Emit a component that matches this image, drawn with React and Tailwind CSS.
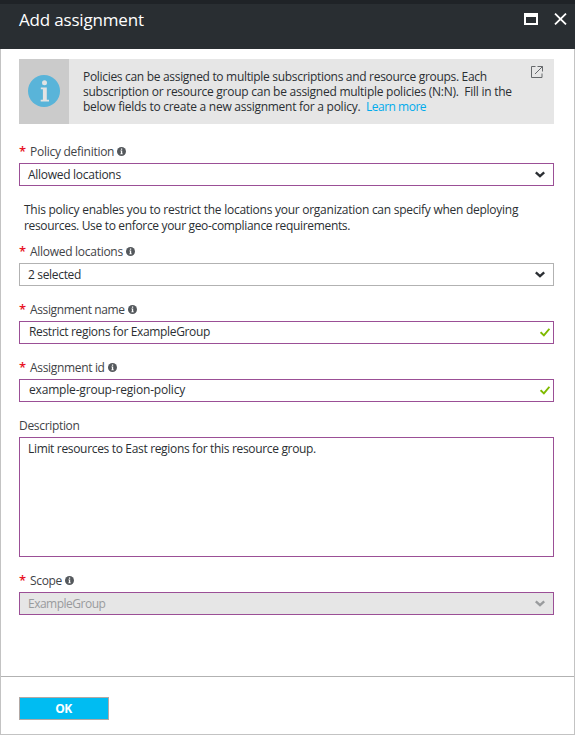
function InfoDot() {
  return (
    <svg width="9" height="9" viewBox="0 0 9 9" className="mb-px shrink-0">
      <circle cx="4.5" cy="4.5" r="4.5" fill="#54585c" />
      <path d="M3.9 1.5h1.3v1.2H3.9zM3.4 3.6h1.8v3h.6v.7H3.3v-.7h.6V4.3h-.5z" fill="#fff" />
    </svg>
  );
}

function Chevron({ className }) {
  return (
    <svg width="10" height="7" viewBox="0 0 10 7" fill="none" stroke="currentColor" strokeWidth="2.3" className={className}>
      <path d="M.8 1.300 5 5.200l4.200-3.900" />
    </svg>
  );
}

function Check() {
  return (
    <svg width="10" height="9" viewBox="0 0 10 9" fill="none" stroke="#7fba00" strokeWidth="1.9">
      <path d="M.6 4.200 3.900 7.400 9.400.8" />
    </svg>
  );
}

function Label({ children, className }) {
  return (
    <div className="flex h-4 items-center">
      <span className="mb-[2px] w-[11px] shrink-0 text-[13px] font-semibold leading-4 text-[#e81123]">*</span>
      <span className={`mr-[3px] whitespace-nowrap text-[#3f4347] ${className}`}>{children}</span>
      <InfoDot />
    </div>
  );
}

export default function App() {
  return (
    <div className="flex h-[735px] w-[575px] flex-col bg-white font-['Open_Sans','Noto_Sans',sans-serif] text-xs leading-4 text-[#2b2f33]">
      <header className="flex h-[49px] shrink-0 items-start justify-between border-t-4 border-[#1f2327] bg-[#292e32] pl-[19px] pr-2">
        <h1 className="mt-1 whitespace-nowrap text-[17px] leading-6 tracking-[-0.18px] text-white">Add assignment</h1>
        <div className="mt-[9px] flex items-start gap-4">
          <svg width="14" height="12" viewBox="0 0 14 12">
            <path d="M0 0h14v12H0zM2 4v6h10V4z" fill="#fff" fillRule="evenodd" />
          </svg>
          <svg width="13" height="12" viewBox="0 0 13 12" fill="none" stroke="#fff" strokeWidth="1.8">
            <path d="m1 .6 11 10.800M12 .6 1 11.400" />
          </svg>
        </div>
      </header>

      <div className="flex min-h-0 flex-1 flex-col border-x border-b border-[#c3c3c3]">
        <main className="flex-1 pl-[18px] pr-5 pt-[10px]">
          <section className="flex h-[65px] bg-[#e6e6e6]">
            <div className="flex w-[50px] items-center justify-center bg-[#cbcbcb] pb-px">
              <svg width="32" height="32" viewBox="0 0 32 32">
                <circle cx="16" cy="16" r="16" fill="#59b4d9" />
                <circle cx="16.500" cy="7.800" r="2.500" fill="#e3e3e3" />
                <path d="M12.800 12.500h6v12.300H21v1.700h-8.300v-1.700h2.200V14.200h-2.100z" fill="#e3e3e3" />
              </svg>
            </div>
            <div className="flex-1 whitespace-nowrap pl-[14px] pt-[10px] leading-[15px]">
              <p className="tracking-[-0.31px]">Policies can be assigned to multiple subscriptions and resource groups. Each</p>
              <p className="tracking-[-0.26px]">subscription or resource group can be assigned multiple policies (N:N).&nbsp; Fill in the</p>
              <p className="tracking-[-0.26px]">
                below fields to create a new assignment for a policy.&nbsp; <a className="tracking-[-0.5px] text-[#00abec]">Learn more</a>
              </p>
            </div>
            <svg width="12" height="12" viewBox="0 0 12 12" fill="none" stroke="#65686b" className="mr-[11px] mt-[7px]">
              <path d="M4.500.5h-4v11h10.500V7.500M6.500.5h5v5M11.500.5 4 8" />
            </svg>
          </section>

          <div className="mt-5">
            <Label className="tracking-[-0.27px]">Policy definition</Label>
            <div className="mt-[3px] flex h-[23px] items-center justify-between border border-[#9b4f96] pl-2 pr-[8px]">
              <span className="mt-px tracking-[-0.28px]">Allowed locations</span>
              <Chevron className="text-[#2b2f33]" />
            </div>
          </div>

          <div className="mt-4 whitespace-nowrap pl-[5px]">
            <p className="tracking-[-0.26px]">This policy enables you to restrict the locations your organization can specify when deploying</p>
            <p className="tracking-[-0.33px]">resources. Use to enforce your geo-compliance requirements.</p>
          </div>

          <div className="mt-[10px]">
            <Label className="tracking-[-0.28px]">Allowed locations</Label>
            <div className="mt-[3px] flex h-[23px] items-center justify-between border border-[#b2b2b2] pl-2 pr-[8px]">
              <span className="mt-px tracking-[-0.33px]">2 selected</span>
              <Chevron className="text-[#2b2f33]" />
            </div>
          </div>

          <div className="mt-4">
            <Label className="tracking-[-0.38px]">Assignment name</Label>
            <div className="mt-[3px] flex h-[23px] items-center justify-between border border-[#9b4f96] pl-[9px] pr-[3px]">
              <span className="mb-px tracking-[-0.35px]">Restrict regions for ExampleGroup</span>
              <Check />
            </div>
          </div>

          <div className="mt-4">
            <Label className="tracking-[-0.33px]">Assignment id</Label>
            <div className="mt-[3px] flex h-[23px] items-center justify-between border border-[#9b4f96] pl-[9px] pr-[3px]">
              <span className="mb-px tracking-[-0.18px]">example-group-region-policy</span>
              <Check />
            </div>
          </div>

          <div className="mt-4">
            <div className="h-4 tracking-[-0.32px] text-[#3f4347]">Description</div>
            <div className="mt-[3px] h-[120px] border border-[#9b4f96] pl-2 pt-[3px]">
              <span className="tracking-[-0.33px]">Limit resources to East regions for this resource group.</span>
            </div>
          </div>

          <div className="mt-4">
            <Label className="tracking-[-0.35px]">Scope</Label>
            <div className="mt-[3px] flex h-[23px] items-center justify-between border border-[#9b4f96] bg-[#e6e6e6] pl-2 pr-[8px] text-[#999b9d]">
              <span className="mt-px tracking-[-0.5px]">ExampleGroup</span>
              <Chevron className="text-[#999b9d]" />
            </div>
          </div>
        </main>

        <footer className="h-[58px] shrink-0 border-t border-[#b2b2b2] pl-[18px] pt-5">
          <button className="flex h-[23px] w-[90px] items-center justify-center border border-[#b2a8a4] bg-[#00bcf2] pt-px pr-px font-bold tracking-[-0.5px] text-white">OK</button>
        </footer>
      </div>
    </div>
  );
}
